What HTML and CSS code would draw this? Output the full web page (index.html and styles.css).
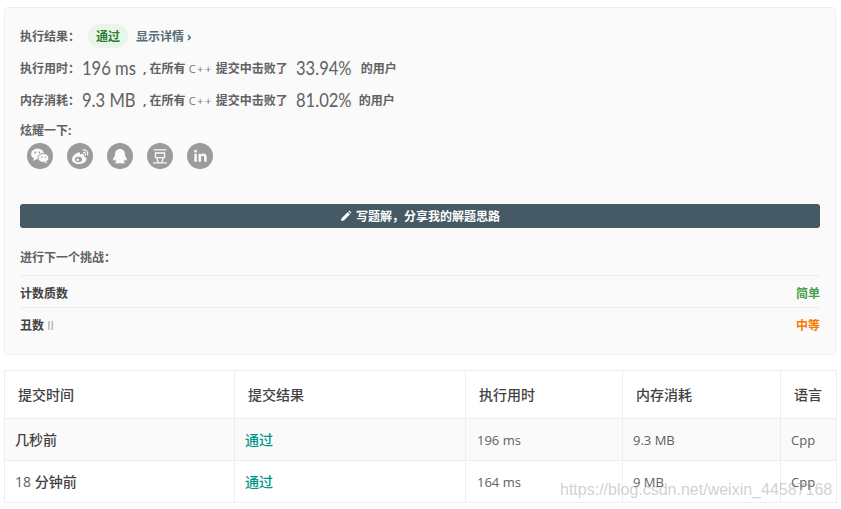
FILE: index.html
```html
<!DOCTYPE html>
<html lang="zh">
<head>
<meta charset="utf-8">
<title>提交结果</title>
<link rel="stylesheet" href="styles.css">
</head>
<body>
<section class="panel">
  <div class="result-row">
    <span class="label result-label">执行结果：</span>
    <span class="pill">通过</span>
    <span class="details">显示详情 ›</span>
  </div>
  <div class="stat-row">
    <span class="label stat-label">执行用时：</span><span class="big-box big-a"><span class="big">196 ms</span></span><span class="mid"><i class="comma">,</i> 在所有 <i class="lat">C++</i> 提交中击败了</span><span class="big-box big-b"><span class="big">33.94%</span></span><span class="label tail">的用户</span>
  </div>
  <div class="stat-row">
    <span class="label stat-label">内存消耗：</span><span class="big-box big-a"><span class="big">9.3 MB</span></span><span class="mid"><i class="comma">,</i> 在所有 <i class="lat">C++</i> 提交中击败了</span><span class="big-box big-c"><span class="big">81.02%</span></span><span class="label tail">的用户</span>
  </div>
  <div class="label share-label">炫耀一下:</div>
  <div class="share">
    <span class="icon"><svg viewBox="0 0 26 26"><ellipse cx="10.5" cy="11" rx="6.5" ry="5.4" fill="#fafafa"/><path d="M7 15l-1 3 3-1.500z" fill="#fafafa"/><ellipse cx="16.500" cy="15" rx="5.500" ry="4.500" fill="#fafafa" stroke="#9b9b9b"/><path d="M19 18.500l1.500 2-3-1z" fill="#fafafa"/><circle cx="8.300" cy="9.500" r=".9" fill="#9b9b9b"/><circle cx="12.500" cy="9.500" r=".9" fill="#9b9b9b"/><circle cx="14.700" cy="14.200" r=".7" fill="#9b9b9b"/><circle cx="18.300" cy="14.200" r=".7" fill="#9b9b9b"/></svg></span>
    <span class="icon"><svg viewBox="0 0 26 26"><path d="M11.500 9.500c-3.500 1-6.500 4-6.500 7 0 2.800 3.300 4.500 6.800 4.500 4.500 0 7.700-2.600 7.700-5 0-1.500-1.300-2.300-2.500-2.600.6-1.600-.2-2.800-2.300-2.500-1.100.2-1.700.5-1.700.5.200-1.700-.4-2.700-1.500-2.400z" fill="#fafafa"/><ellipse cx="11.500" cy="16.500" rx="3.600" ry="2.800" fill="#9b9b9b"/><circle cx="10.800" cy="16.800" r="1.300" fill="#fafafa"/><path d="M16 7c3-.7 5.500 2 4.500 5M16.300 9.500c1.500-.3 2.600 1 2.200 2.400" fill="none" stroke="#fafafa" stroke-width="1.200" stroke-linecap="round"/></svg></span>
    <span class="icon"><svg viewBox="0 0 26 26"><path d="M13 6c-3.200 0-5 2.300-5 5.200v1.500c-1.300 1.500-2.200 3.200-1.800 4.700.5.600 1.300-.4 1.800-1.200.3 1 .8 1.800 1.500 2.400-1.100.4-1.600 1-1.300 1.400.5.700 3 .5 4.800-.1 1.800.6 4.300.8 4.800.1.300-.4-.2-1-1.300-1.400.7-.6 1.200-1.400 1.500-2.400.5.800 1.300 1.800 1.800 1.200.4-1.500-.5-3.200-1.800-4.700v-1.500c0-2.900-1.800-5.200-5-5.200z" fill="#fafafa"/></svg></span>
    <span class="icon"><svg viewBox="0 0 26 26"><path d="M6.500 6.800h13M8.500 10h9v4.700h-9zM10 15.500l1.200 4M16 15.500l-1.200 4M6 19.800h14" fill="none" stroke="#fafafa" stroke-width="1.300"/></svg></span>
    <span class="icon"><svg viewBox="0 0 26 26"><rect x="7.300" y="10.800" width="2.500" height="8" fill="#fafafa"/><circle cx="8.500" cy="8.300" r="1.500" fill="#fafafa"/><path d="M11.500 10.800h2.400v1.200c.6-.9 1.500-1.400 2.600-1.400 2.200 0 3.200 1.300 3.200 3.600v4.600h-2.500v-4.200c0-1.200-.4-1.900-1.400-1.900s-1.800.7-1.800 2v4.100h-2.500z" fill="#fafafa"/></svg></span>
  </div>
  <a class="solution"><svg class="pen" viewBox="0 0 12 12"><path d="M1 11l.6-2.800 6.200-6.200 2.200 2.200-6.200 6.200zM8.500 1.300l.8-.8 2.200 2.200-.8.800z" fill="#fff"/></svg>写题解，分享我的解题思路</a>
  <div class="label next-label">进行下一个挑战：</div>
  <div class="next-row"><span class="next-name">计数质数</span><span class="easy">简单</span></div>
  <div class="next-row"><span class="next-name">丑数 <i class="roman">II</i></span><span class="medium">中等</span></div>
</section>
<table class="subs">
  <thead>
    <tr><th class="c1">提交时间</th><th class="c2">提交结果</th><th class="c3">执行用时</th><th class="c4">内存消耗</th><th class="c5">语言</th></tr>
  </thead>
  <tbody>
    <tr class="odd"><td class="when">几秒前</td><td class="ok">通过</td><td class="num">196 ms</td><td class="num">9.3 MB</td><td class="num">Cpp</td></tr>
    <tr><td class="when"><span class="when-num">18</span> 分钟前</td><td class="ok">通过</td><td class="num">164 ms</td><td class="num">9 MB</td><td class="num">Cpp</td></tr>
  </tbody>
</table>
<div class="watermark">https://blog.csdn.net/weixin_44587168</div>
</body>
</html>
```

FILE: styles.css
```css
* { box-sizing: border-box; }
html, body { margin: 0; padding: 0; }
body {
  width: 841px;
  height: 509px;
  overflow: hidden;
  background: #fff;
  position: relative;
  padding: 7px 5px 0 4px;
  font-family: "Open Sans", "Noto Sans CJK SC", sans-serif;
  color: #424242;
}
.panel {
  height: 348px;
  background: #fafafa;
  border: 1px solid #eeeeee;
  border-radius: 4px;
  padding: 16px 15px 0;
}
.label { font-size: 12px; font-weight: 700; color: #616161; }
.result-row { display: flex; align-items: center; height: 24px; }
.result-label { width: 68px; }
.pill {
  width: 40px; height: 24px; border-radius: 12px;
  background: #e8f5e9; color: #2e7d32;
  font-size: 12px; font-weight: 700;
  display: flex; align-items: center; justify-content: center;
}
.details { margin-left: 8px; font-size: 12px; font-weight: 700; color: #546e7a; }
.stat-row { display: flex; align-items: center; height: 24px; margin-top: 8px; white-space: nowrap; }
.stat-label { width: 62px; }
.big-box { display: block; line-height: 24px; }
.big {
  display: inline-block;
  font-family: "Lato", sans-serif;
  font-size: 19.500px;
  color: #616161;
  line-height: 24px;
  transform: scaleX(0.85);
  transform-origin: left center;
}
.big-a { width: 60px; }
.big-b { margin-left: 8px; width: 56px; }
.big-c { margin-left: 8px; width: 54px; }
.mid { font-size: 12px; font-weight: 700; color: #616161; }
.comma { font-style: normal; margin-left: 1px; }
.lat { font-style: normal; font-weight: 400; font-size: 11px; letter-spacing: 1.500px; color: #757575; }
.tail { margin-left: 9px; }
.share-label { margin-top: 10px; line-height: 18px; }
.share { display: flex; gap: 14px; padding-left: 7px; margin-top: 3px; }
.icon { width: 26px; height: 26px; border-radius: 50%; background: #9b9b9b; display: block; }
.icon svg { display: block; width: 26px; height: 26px; }
.solution {
  display: flex; align-items: center; justify-content: center;
  height: 24px; margin-top: 35px;
  background: #455a64; border-radius: 3px;
  color: #fff; font-size: 12px; font-weight: 700;
}
.pen { width: 12px; height: 12px; margin-right: 4px; }
.next-label { margin-top: 21px; line-height: 18px; }
.next-row {
  display: flex; justify-content: space-between; align-items: center;
  height: 32px; padding-top: 2px; border-top: 1px solid #eeeeee;
  font-size: 12px; font-weight: 700;
}
.next-label + .next-row { margin-top: 8px; }
.next-name { color: #424242; }
.roman { font-style: normal; font-weight: 400; color: #9e9e9e; }
.easy { color: #43a047; font-weight: 700; }
.medium { color: #f57c00; font-weight: 700; }
.subs {
  margin-top: 15px;
  width: 832px;
  border-collapse: collapse;
  table-layout: fixed;
  font-size: 13px;
  color: #424242;
}
.subs th, .subs td { border: 1px solid #eeeeee; text-align: left; }
.subs th { height: 48px; padding: 0 13px 2px; font-size: 14px; font-weight: 500; }
.subs td { height: 42px; padding: 0 10px 2px; }
.subs .when { font-size: 14px; font-weight: 500; }
.c1 { width: 230px; }
.c2 { width: 231px; }
.c3 { width: 157px; }
.c4 { width: 158px; }
.c5 { width: 56px; }
.odd { background: #fafafa; }
.ok { color: #009688; font-size: 14px; font-weight: 500; }
.subs .num { font-weight: 400; color: #616161; font-size: 13px; padding-bottom: 0; }
.when-num { font-size: 14px; font-weight: 400; color: #616161; }
.subs .num:nth-child(3) { padding-left: 11px; }
.watermark {
  position: absolute;
  left: 560px;
  top: 481px;
  font-family: "Liberation Sans", sans-serif;
  font-size: 16px;
  color: rgba(150, 150, 150, 0.45);
  white-space: nowrap;
}
```
